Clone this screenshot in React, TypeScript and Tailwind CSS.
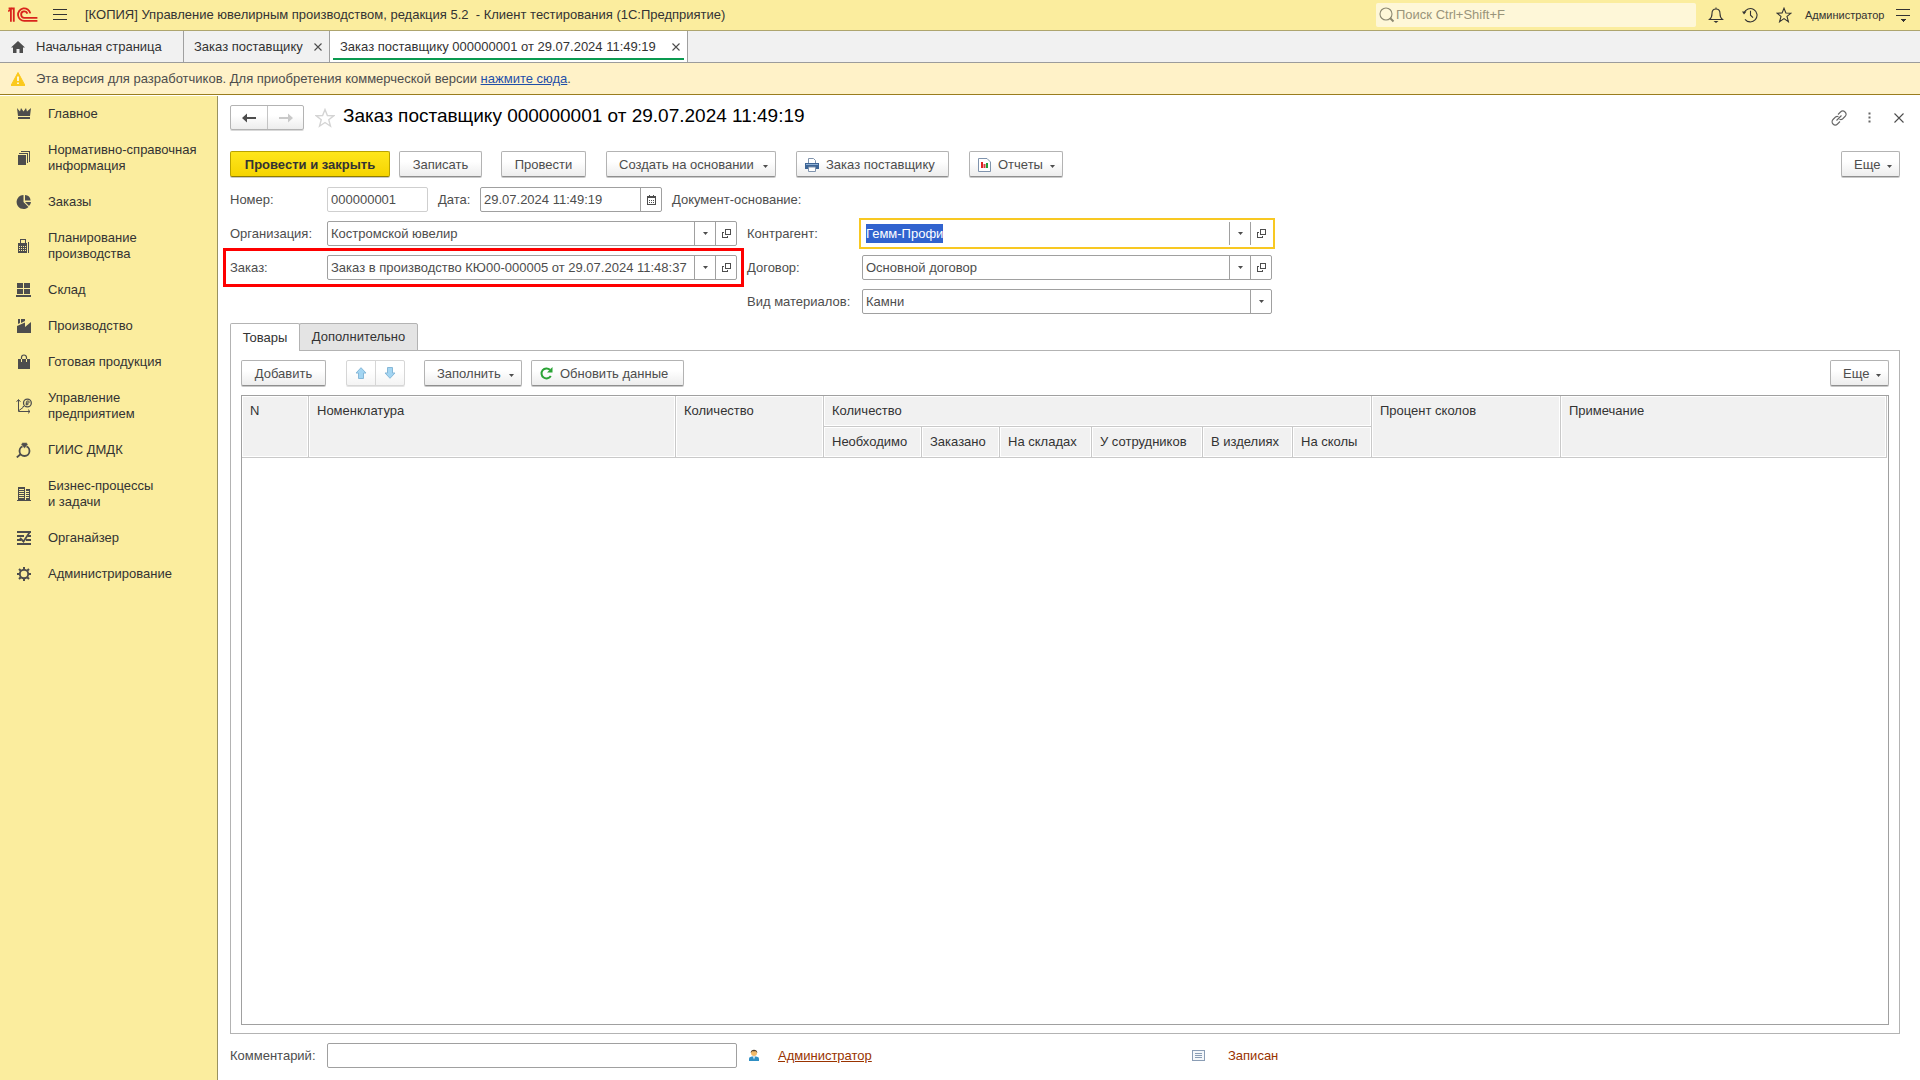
import React, { useEffect, useRef } from 'react';

/* ---------- icons ---------- */

const Logo = () => (
  <svg width="30" height="16" viewBox="0 0 30 16" fill="none" stroke="#d9241c" strokeWidth="1.8">
    <path d="M0.2 4.4 L2.9 2.4 V14.8" />
    <path d="M0.6 1.5 H5.8 V14.8" />
    <path d="M22.3 6.4 A6.2 6.2 0 1 0 16.6 13.8 H29.4" />
    <path d="M19.4 6.6 A3.2 3.2 0 1 0 16.6 10.8 H29.4" />
  </svg>
);

const Caret = () => (
  <svg width="5" height="3" viewBox="0 0 5 3" fill="#4d4d4d">
    <path d="M0 0 H5 L2.5 3 Z" />
  </svg>
);

const OpenIcon = () => (
  <svg width="9" height="9" viewBox="0 0 9 9" fill="none" stroke="#4d4d4d" shapeRendering="crispEdges">
    <path d="M3.5 0.5 H8.5 V5.5 H3.5 Z" />
    <path d="M2 3.5 H0.5 V8.5 H5.5 V7" />
  </svg>
);

const CloseIcon = ({ size = 8 }: { size?: number }) => (
  <svg width={size} height={size} viewBox={`0 0 ${size} ${size}`} stroke="#4d4d4d" strokeWidth="1.1">
    <path d={`M0.5 0.5 L${size - 0.5} ${size - 0.5} M${size - 0.5} 0.5 L0.5 ${size - 0.5}`} />
  </svg>
);

const StarIcon = ({ color, size }: { color: string; size: number }) => (
  <svg width={size} height={size} viewBox="0 0 16 16" fill="none" stroke={color} strokeWidth="1.1">
    <path d="M8 1.2 L9.9 6 L15 6.2 L11 9.4 L12.4 14.6 L8 11.6 L3.6 14.6 L5 9.4 L1 6.2 L6.1 6 Z" />
  </svg>
);

const sectionIcons: Record<string, React.ReactNode> = {
  crown: <path d="M1 2 L4 5.5 L5 2 L7.5 5.5 L10 2 L11 5.5 L15 2 L14 10 H2 Z M2 11 H14 V13 H2 Z" />,
  stack: (
    <g shapeRendering="crispEdges">
      <path d="M2 5 H10 V15 H2 Z" />
      <path d="M3 3.5 H11.5 V13 M5 1.5 H13.5 V12" fill="none" stroke="#4d4d4d" />
    </g>
  ),
  pie: <path d="M7.5 1 V8 L12.5 13 A7 7 0 1 1 7.5 1 Z M9 1 A6 6 0 0 1 14.6 6.5 H9 Z M9 8 H15 A6 6 0 0 1 13 12 Z" />,
  calc: (
    <g shapeRendering="crispEdges">
      <path d="M4.5 5 V1.5 H9.5 V5" fill="none" stroke="#4d4d4d" />
      <path d="M2 5 H11 V15 H2 Z M12 4 H13 V15 H12 Z" />
      <path d="M3 8.5 H10 M3 10.5 H10 M3 12.5 H10" stroke="#fbed9e" strokeDasharray="1 1" />
    </g>
  ),
  warehouse: (
    <path shapeRendering="crispEdges" d="M1 1 H7 V6 H1 Z M8 1 H14 V6 H8 Z M1 7 H7 V12 H1 Z M8 7 H14 V12 H8 Z M0 13 H15 V15 H0 Z" />
  ),
  factory: <path d="M2 1 H4 V5 L2 6 Z M5 1 H9 V3 L5 5 Z M1 8 L9 4.5 V9 L15 4 V15 H1 Z" />,
  bag: (
    <>
      <path d="M2 5 H14 V15 H2 Z" />
      <path d="M5.5 6 V3.5 A2.5 2.5 0 0 1 10.5 3.5 V6" fill="none" stroke="#4d4d4d" strokeWidth="1.2" />
      <path d="M5.5 5 V8 M10.5 5 V8" stroke="#fbed9e" />
    </>
  ),
  chart: (
    <>
      <path d="M2.5 2 V13.5 H14 M0.6 3.8 L2.5 1.5 L4.4 3.8 M12 11.6 L14 13.5 L12 15.4 M3 12.5 L7 9.5 V8.5 H8" fill="none" stroke="#4d4d4d" />
      <circle cx="11.4" cy="5" r="3.9" fill="none" stroke="#4d4d4d" strokeWidth="1.3" />
      <path d="M10.8 7.5 V3 H12.2 A1 1 0 0 1 12.2 5.1 H9.6 M9.6 6.3 H12.4" fill="none" stroke="#4d4d4d" strokeWidth="1" />
    </>
  ),
  ring: (
    <>
      <circle cx="8.5" cy="9" r="5" fill="none" stroke="#4d4d4d" strokeWidth="1.8" />
      <path d="M5 2.4 L6.5 0.6 H10.5 L12 2.4 L8.5 6.5 Z" stroke="#fbed9e" strokeWidth="0.6" />
      <path d="M4.8 12 L0.8 15.4" stroke="#4d4d4d" strokeWidth="1.8" />
    </>
  ),
  building: (
    <g shapeRendering="crispEdges">
      <path d="M2 1 H9 V14 H2 Z M10 3 H14 V14 H10 Z M1 14 H15 V15 H1 Z" />
      <path
        d="M3 3.5 H8 M3 5.5 H8 M3 7.5 H8 M3 9.5 H8 M3 11.5 H8 M10 5.5 H13 M10 7.5 H13 M10 9.5 H13 M10 11.5 H13"
        stroke="#fbed9e"
      />
    </g>
  ),
  organizer: (
    <>
      <path d="M1 1 H15 V3 H1 Z M1 5 H8 V7 H1 Z M12 5 H15 V7 H12 Z M1 9 H5 V11 H1 Z M10 9 H15 V11 H10 Z M1 13 H15 V15 H1 Z" />
      <path d="M4 8 L7.5 11.5 L13.5 2.5" fill="none" stroke="#4d4d4d" strokeWidth="1.8" />
    </>
  ),
  gear: (
    <>
      <circle cx="8" cy="8" r="4.2" fill="none" stroke="#4d4d4d" strokeWidth="1.9" />
      <path
        d="M8 1 V3.5 M8 12.5 V15 M1 8 H3.5 M12.5 8 H15 M3 3 L4.8 4.8 M11.2 11.2 L13 13 M3 13 L4.8 11.2 M11.2 4.8 L13 3"
        stroke="#4d4d4d"
        strokeWidth="2"
      />
    </>
  ),
};

/* ---------- data ---------- */

const sections = [
  { icon: 'crown', lines: ['Главное'] },
  { icon: 'stack', lines: ['Нормативно-справочная', 'информация'] },
  { icon: 'pie', lines: ['Заказы'] },
  { icon: 'calc', lines: ['Планирование', 'производства'] },
  { icon: 'warehouse', lines: ['Склад'] },
  { icon: 'factory', lines: ['Производство'] },
  { icon: 'bag', lines: ['Готовая продукция'] },
  { icon: 'chart', lines: ['Управление', 'предприятием'] },
  { icon: 'ring', lines: ['ГИИС ДМДК'] },
  { icon: 'building', lines: ['Бизнес-процессы', 'и задачи'] },
  { icon: 'organizer', lines: ['Органайзер'] },
  { icon: 'gear', lines: ['Администрирование'] },
];

const quantityColumns = ['Необходимо', 'Заказано', 'На складах', 'У сотрудников', 'В изделиях', 'На сколы'];

/* ---------- controls ---------- */

interface ButtonProps {
  className?: string;
  icon?: React.ReactNode;
  caret?: boolean;
  children: React.ReactNode;
}

const Button = ({ className = '', icon, caret, children }: ButtonProps) => (
  <button
    type="button"
    className={`flex h-[26px] shrink-0 items-center rounded-xs border border-[#b3b3b3] border-b-[#8f8f8f] bg-linear-to-b from-white from-40% to-[#ededed] pt-px whitespace-nowrap shadow-[0_1px_0_#c9c9c9] ${
      icon ? 'gap-[7px] pl-2' : caret ? 'pl-3' : 'justify-center'
    } ${className}`}
  >
    {icon}
    {children}
    {caret && (
      <span className="mt-1 mr-[7px] ml-auto">
        <Caret />
      </span>
    )}
  </button>
);

interface FieldProps {
  id: string;
  value: string;
  focused?: boolean;
}

// Reference field: text, list button, open button
const RefField = ({ id, value, focused }: FieldProps) => {
  const ref = useRef<HTMLInputElement>(null);

  useEffect(() => {
    if (focused) {
      ref.current?.focus();
      ref.current?.select();
    }
  }, [focused]);

  return (
    <div
      className={`flex h-[25px] w-[410px] border bg-white ${
        focused ? 'border-white ring-2 ring-[#f8c822] ring-offset-1' : 'rounded-xs border-[#a0a0a0]'
      }`}
    >
      <input
        ref={ref}
        id={id}
        defaultValue={value}
        className="my-px mr-1 min-w-0 flex-1 bg-transparent pl-[3px] outline-none selection:bg-[#3163cf] selection:text-white"
      />
      <button type="button" aria-label="Выбрать" className="flex w-[21px] items-center justify-center border-l border-[#a0a0a0]">
        <Caret />
      </button>
      <button type="button" aria-label="Открыть" className="flex w-[21px] items-center justify-center border-l border-[#a0a0a0]">
        <OpenIcon />
      </button>
    </div>
  );
};

/* ---------- page parts ---------- */

const TopBar = () => (
  <header className="flex h-[31px] items-center border-b border-[#aea56e] bg-[#fbed9e] pl-2">
    <Logo />
    <button type="button" aria-label="Меню" className="ml-[15px]">
      <svg width="14" height="12" viewBox="0 0 14 12" stroke="#333" shapeRendering="crispEdges">
        <path d="M0 0.5 H14 M0 5.5 H14 M0 10.5 H14" />
      </svg>
    </button>
    <h1 className="ml-[18px] whitespace-pre text-[#333]">
      [КОПИЯ] Управление ювелирным производством, редакция 5.2{'  '}- Клиент тестирования (1С:Предприятие)
    </h1>
    <label className="ml-auto flex h-6 w-80 items-center rounded-xs bg-[#fef7d8] pl-[3px]">
      <svg width="16" height="16" viewBox="0 0 16 16" fill="none" stroke="#8c8871" strokeWidth="1.1">
        <circle cx="7" cy="7" r="6" />
        <path d="M11 11 L14.5 14.5" strokeWidth="2" />
      </svg>
      <input
        type="search"
        aria-label="Поиск"
        placeholder="Поиск Ctrl+Shift+F"
        className="ml-px flex-1 bg-transparent outline-none placeholder:text-[#99947a]"
      />
    </label>
    <button type="button" aria-label="Уведомления" className="ml-3">
      <svg width="16" height="16" viewBox="0 0 16 16" fill="none" stroke="#333" strokeWidth="1.1">
        <path d="M1.5 12.5 C3.5 11 4 9.5 4 6.5 C4 3.8 5.5 2 8 2 C10.5 2 12 3.8 12 6.5 C12 9.5 12.5 11 14.5 12.5 Z M8 0.5 V2" />
        <path d="M5.5 14 H10.5 L8 16 Z" fill="#333" stroke="none" />
      </svg>
    </button>
    <button type="button" aria-label="История" className="ml-[18px]">
      <svg width="16" height="16" viewBox="0 0 16 16" fill="none" stroke="#333" strokeWidth="1.1">
        <path d="M2 6 A6.7 6.7 0 1 1 3 12.3 M8.5 3.8 V8.2 L11 10.6" />
        <path d="M0 4.5 H4.5 L2 7.5 Z" fill="#333" stroke="none" />
      </svg>
    </button>
    <button type="button" aria-label="Избранное" className="ml-[18px]">
      <StarIcon color="#333" size={16} />
    </button>
    <button type="button" className="ml-[13px] w-[77px] text-left text-[11px] text-[#333]">
      Администратор
    </button>
    <button type="button" aria-label="Сервис" className="mr-2.5 ml-3.5">
      <svg width="14" height="14" viewBox="0 0 14 14" fill="#333" shapeRendering="crispEdges">
        <path d="M0 1 H14 V2 H0 Z M0 7 H14 V8 H0 Z M4 11 H10 L7 14 Z" />
      </svg>
    </button>
  </header>
);

const WindowTabs = () => (
  <nav className="flex h-8 border-b border-[#9c9c9c] bg-[#f1f1f1] text-[#333]">
    <a href="#home" className="flex w-[184px] items-center border-r border-[#a0a0a0] pl-[11px]">
      <svg width="14" height="12" viewBox="0 0 14 12" fill="#4d4d4d">
        <path d="M7 0 L14 6.5 H12 V12 H8.5 V8 H5.5 V12 H2 V6.5 H0 Z" />
      </svg>
      <span className="ml-[11px]">Начальная страница</span>
    </a>
    <div className="flex w-[146px] items-center justify-between border-r border-[#a0a0a0] pr-[7px] pl-2.5">
      <a href="#list">Заказ поставщику</a>
      <button type="button" aria-label="Закрыть вкладку">
        <CloseIcon />
      </button>
    </div>
    <div className="flex w-[358px] border-r border-[#a0a0a0] bg-white px-[3px]">
      <div className="mb-[2px] flex flex-1 items-center justify-between border-b-2 border-[#0a9a50] pt-1 pr-1 pl-[7px]">
        <a href="#document" className="whitespace-nowrap">
          Заказ поставщику 000000001 от 29.07.2024 11:49:19
        </a>
        <button type="button" aria-label="Закрыть вкладку">
          <CloseIcon />
        </button>
      </div>
    </div>
  </nav>
);

const Banner = () => (
  <div className="flex h-8 items-center border-b border-[#9a7d1e] bg-[#fff2c8] pl-[11px]">
    <svg width="14" height="14" viewBox="0 0 14 14">
      <path d="M7 0.5 L14 13.5 H0 Z" fill="#fbc91c" stroke="#fbc91c" strokeLinejoin="round" />
      <path d="M7 4.5 V9 M7 10.5 V12" stroke="#fff" strokeWidth="1.6" />
    </svg>
    <p className="ml-[11px]">
      Эта версия для разработчиков. Для приобретения коммерческой версии{' '}
      <a href="#buy" className="text-[#1f4fa8] underline">
        нажмите сюда
      </a>
      .
    </p>
  </div>
);

const Sidebar = () => (
  <aside className="w-[218px] shrink-0 border-r border-[#99925f] bg-[#fbed9e] text-[#333]">
    <ul>
      {sections.map((section) => (
        <li key={section.icon}>
          <a href={`#${section.icon}`} className="flex items-center py-2.5 pl-4 leading-4">
            <svg width="16" height="16" viewBox="0 0 16 16" fill="#4d4d4d" className="shrink-0">
              {sectionIcons[section.icon]}
            </svg>
            <span className="ml-4">
              {section.lines.map((line) => (
                <span key={line} className="block whitespace-nowrap">
                  {line}
                </span>
              ))}
            </span>
          </a>
        </li>
      ))}
    </ul>
  </aside>
);

const FormHeader = () => (
  <div className="flex h-[25px] items-center">
    <div className="flex h-[25px] rounded-xs border border-[#b3b3b3] bg-linear-to-b from-white from-40% to-[#ededed] shadow-[0_1px_0_#d9d9d9]">
      <button type="button" aria-label="Назад" className="flex w-9 items-center justify-center">
        <svg width="14" height="10" viewBox="0 0 14 10" fill="#4d4d4d">
          <path d="M0 5 L5 0.5 V4 H14 V6 H5 V9.5 Z" />
        </svg>
      </button>
      <button type="button" aria-label="Вперед" className="flex w-9 items-center justify-center border-l border-[#c4c4c4]">
        <svg width="14" height="10" viewBox="0 0 14 10" fill="#c9c9c9">
          <path d="M14 5 L9 0.5 V4 H0 V6 H9 V9.5 Z" />
        </svg>
      </button>
    </div>
    <button type="button" aria-label="В избранное" className="ml-[11px]">
      <StarIcon color="#d4d4d4" size={20} />
    </button>
    <h2 className="ml-2 pb-0.5 text-[19px] text-black">Заказ поставщику 000000001 от 29.07.2024 11:49:19</h2>
    <div className="-mr-1 ml-auto flex items-center">
      <button type="button" aria-label="Ссылка">
        <svg width="16" height="16" viewBox="0 0 16 16" fill="none" stroke="#666" strokeWidth="1.1">
          <path d="M7 4.5 L9.5 2 A3 3 0 0 1 14 6.5 L11.5 9 A3 3 0 0 1 8.5 9.3" />
          <path d="M9 11.5 L6.5 14 A3 3 0 0 1 2 9.5 L4.5 7 A3 3 0 0 1 7.5 6.7 M5.5 10.5 L10.5 5.5" />
        </svg>
      </button>
      <button type="button" aria-label="Еще действия" className="ml-[21px]">
        <svg width="3" height="11" viewBox="0 0 3 11" fill="#666">
          <path d="M0.5 0.5 H2.5 V2.5 H0.5 Z M0.5 4.5 H2.5 V6.5 H0.5 Z M0.5 8.5 H2.5 V10.5 H0.5 Z" />
        </svg>
      </button>
      <button type="button" aria-label="Закрыть" className="ml-[23px]">
        <CloseIcon size={10} />
      </button>
    </div>
  </div>
);

const PrinterIcon = () => (
  <svg width="14" height="14" viewBox="0 0 14 14">
    <path d="M3.5 5 V0.5 H8.5 L10.5 2.5 V5" fill="#fff" stroke="#7f93ad" />
    <path d="M0 5 H14 V11 H0 Z" fill="#3d6596" />
    <path d="M1 6.5 H13" stroke="#8fb0d4" />
    <path d="M3.5 9 H10.5 V13.5 H3.5 Z" fill="#fff" stroke="#7f93ad" />
  </svg>
);

const ReportIcon = () => (
  <svg width="13" height="14" viewBox="0 0 13 14">
    <path d="M0.5 0.5 H9 L12.5 4 V13.5 H0.5 Z" fill="#fff" stroke="#7f93ad" />
    <path d="M3 4 H5 V10 H3 Z" fill="#e02424" />
    <path d="M5.5 6 H7.5 V10 H5.5 Z" fill="#d04545" />
    <path d="M8 5 H10 V10 H8 Z" fill="#1e9e3a" />
  </svg>
);

const RefreshIcon = () => (
  <svg width="13" height="13" viewBox="0 0 13 13">
    <path d="M10.8 9 A5 5 0 1 1 10 2.8" fill="none" stroke="#2ba336" strokeWidth="2" />
    <path d="M7 5.5 L12.5 5.5 V0 Z" fill="#2ba336" />
  </svg>
);

const CommandBar = () => (
  <div className="mt-[21px] flex h-[27px]">
    <button
      type="button"
      className="h-[26px] w-40 rounded-xs border border-[#b9a200] border-b-[#8f7d00] bg-linear-to-b from-[#ffe61a] to-[#f5d400] pt-px font-bold whitespace-nowrap text-[#333] shadow-[0_1px_0_#c9c9c9]"
    >
      Провести и закрыть
    </button>
    <Button className="ml-[9px] w-[83px]">Записать</Button>
    <Button className="ml-[19px] w-[85px]">Провести</Button>
    <Button caret className="ml-5 w-[170px]">
      Создать на основании
    </Button>
    <Button icon={<PrinterIcon />} className="ml-5 w-[153px]">
      Заказ поставщику
    </Button>
    <Button icon={<ReportIcon />} caret className="ml-5 w-[94px]">
      Отчеты
    </Button>
    <Button caret className="ml-auto w-[59px]">
      Еще
    </Button>
  </div>
);

const DocumentFields = () => (
  <form className="mt-[9px] flex flex-col gap-[9px]">
    <div className="flex h-[25px] items-center">
      <label htmlFor="number" className="w-[97px]">
        Номер:
      </label>
      <input
        id="number"
        readOnly
        defaultValue="000000001"
        className="h-[25px] w-[101px] rounded-xs border border-[#cfcfcf] pl-[3px] outline-none"
      />
      <label htmlFor="date" className="ml-2.5 w-[42px]">
        Дата:
      </label>
      <div className="flex h-[25px] w-[182px] rounded-xs border border-[#a0a0a0]">
        <input id="date" defaultValue="29.07.2024 11:49:19" className="min-w-0 flex-1 bg-transparent pl-[3px] outline-none" />
        <button type="button" aria-label="Календарь" className="flex w-[21px] items-center justify-center border-l border-[#a0a0a0]">
          <svg width="9" height="10" viewBox="0 0 9 10" fill="none" stroke="#4d4d4d" shapeRendering="crispEdges">
            <path d="M0.5 1.5 H8.5 V9.5 H0.5 Z M0 2.5 H9 M2.5 0 V2 M6.5 0 V2" />
            <path d="M2 5.5 H8 M2 7.5 H8" strokeDasharray="1 1" />
          </svg>
        </button>
      </div>
      <span className="ml-2.5">Документ-основание:</span>
    </div>

    <div className="flex gap-2.5">
      <div className="flex flex-col gap-[9px]">
        <div className="flex items-center">
          <label htmlFor="org" className="w-[97px]">
            Организация:
          </label>
          <RefField id="org" value="Костромской ювелир" />
        </div>
        <div className="relative flex items-center">
          <label htmlFor="order" className="w-[97px]">
            Заказ:
          </label>
          <RefField id="order" value="Заказ в производство КЮ00-000005 от 29.07.2024 11:48:37" />
          <div className="pointer-events-none absolute -inset-[7px] border-3 border-[#fe0000]" />
        </div>
      </div>
      <div className="flex flex-col gap-[9px]">
        <div className="flex items-center">
          <label htmlFor="partner" className="w-[115px]">
            Контрагент:
          </label>
          <RefField id="partner" value="Гемм-Профи" focused />
        </div>
        <div className="flex items-center">
          <label htmlFor="contract" className="w-[115px]">
            Договор:
          </label>
          <RefField id="contract" value="Основной договор" />
        </div>
        <div className="flex items-center">
          <label htmlFor="kind" className="w-[115px] whitespace-nowrap">
            Вид материалов:
          </label>
          <div className="flex h-[25px] w-[410px] rounded-xs border border-[#a0a0a0]">
            <select id="kind" className="flex-1 appearance-none bg-transparent pl-[3px] outline-none">
              <option>Камни</option>
            </select>
            <span className="flex w-[21px] items-center justify-center border-l border-[#a0a0a0]">
              <Caret />
            </span>
          </div>
        </div>
      </div>
    </div>
  </form>
);

const thClass = 'border-r border-b border-[#c9c9c9] bg-[#f1f1f1] px-2 py-[7px] text-left align-top font-normal leading-4 whitespace-nowrap shadow-[inset_0_0_0_1px_#fff]';

const GoodsTable = () => (
  <div className="mt-2 flex-1 border border-[#a0a0a0] pr-px">
    <table className="w-full table-fixed border-separate border-spacing-0 text-[#333]">
      <colgroup>
        <col className="w-[67px]" />
        <col className="w-[367px]" />
        <col className="w-[148px]" />
        <col className="w-[98px]" />
        <col className="w-[78px]" />
        <col className="w-[92px]" />
        <col className="w-[111px]" />
        <col className="w-[90px]" />
        <col className="w-[79px]" />
        <col className="w-[189px]" />
        <col />
      </colgroup>
      <thead>
        <tr>
          <th rowSpan={2} className={thClass}>N</th>
          <th rowSpan={2} className={thClass}>Номенклатура</th>
          <th rowSpan={2} className={thClass}>Количество</th>
          <th colSpan={6} className={thClass}>Количество</th>
          <th rowSpan={2} className={thClass}>Процент сколов</th>
          <th rowSpan={2} className={thClass}>Примечание</th>
        </tr>
        <tr>
          {quantityColumns.map((name) => (
            <th key={name} className={thClass}>{name}</th>
          ))}
        </tr>
      </thead>
      <tbody />
    </table>
  </div>
);

const GoodsPanel = () => (
  <section className="mt-[9px] flex flex-1 flex-col">
    <div role="tablist" className="relative z-10 -mb-px flex h-7 text-[#333]">
      <button type="button" role="tab" aria-selected="true" className="w-[70px] rounded-t-xs border border-b-0 border-[#b3b3b3] bg-white">
        Товары
      </button>
      <button type="button" role="tab" aria-selected="false" className="-ml-px w-[119px] rounded-t-xs border border-[#b3b3b3] bg-[#e4e4e4]">
        Дополнительно
      </button>
    </div>
    <div className="flex flex-1 flex-col border border-[#b3b3b3] px-2.5 pt-[9px] pb-2">
      <div className="flex h-[27px]">
        <Button className="w-[85px]">Добавить</Button>
        <div className="ml-5 flex h-[26px] rounded-xs border border-[#d6d6d6] bg-linear-to-b from-white from-40% to-[#f4f4f4] shadow-[0_1px_0_#e4e4e4]">
          <button type="button" aria-label="Вверх" className="flex w-7 items-center justify-center">
            <svg width="12" height="12" viewBox="0 0 12 12" fill="#a3d5f2" stroke="#86b8d8">
              <path d="M6 0.7 L11 6 H8.5 V11.5 H3.5 V6 H1 Z" />
            </svg>
          </button>
          <button type="button" aria-label="Вниз" className="flex w-[29px] items-center justify-center border-l border-[#d6d6d6]">
            <svg width="12" height="12" viewBox="0 0 12 12" fill="#a3d5f2" stroke="#86b8d8">
              <path d="M6 11.3 L11 6 H8.5 V0.5 H3.5 V6 H1 Z" />
            </svg>
          </button>
        </div>
        <Button caret className="ml-[19px] w-[98px]">
          Заполнить
        </Button>
        <Button icon={<RefreshIcon />} className="ml-[9px] w-[153px]">
          Обновить данные
        </Button>
        <Button caret className="ml-auto w-[59px]">
          Еще
        </Button>
      </div>
      <GoodsTable />
    </div>
  </section>
);

const FormFooter = () => (
  <footer className="mt-[9px] flex items-center">
    <label htmlFor="comment" className="w-[97px]">
      Комментарий:
    </label>
    <input id="comment" className="h-[25px] w-[410px] rounded-xs border border-[#a0a0a0] pl-[3px] outline-none" />
    <svg width="12" height="14" viewBox="0 0 12 14" className="ml-[11px]">
      <path d="M1 12 V9.5 C1 8 3 7.5 6 7.5 C9 7.5 11 8 11 9.5 V12 Z" fill="#2f8fc4" />
      <circle cx="6" cy="4" r="3" fill="#f2b968" />
      <path d="M2.8 4 C2 -0.5 10 -0.5 9.2 4 L8 2.3 H4 Z" fill="#4a3a2a" />
      <path d="M5 7.5 H7 L6 10.5 Z" fill="#fff" />
    </svg>
    <a href="#author" className="ml-[18px] w-[414px] text-[#993300] underline">
      Администратор
    </a>
    <svg width="13" height="11" viewBox="0 0 13 11" fill="#f4f7fa" stroke="#8a9db5" shapeRendering="crispEdges">
      <path d="M0.5 0.5 H12.5 V10.5 H0.5 Z M3 3.5 H10 M3 5.5 H10 M3 7.5 H10" />
    </svg>
    <span className="ml-[23px] text-[#993300]">Записан</span>
  </footer>
);

export default function App() {
  return (
    <div className="flex min-h-screen flex-col bg-white font-['Liberation_Sans',Arial,sans-serif] text-[13px] text-[#4d4d4d]">
      <TopBar />
      <WindowTabs />
      <Banner />
      <div className="flex flex-1 pt-px">
        <Sidebar />
        <main className="flex min-w-0 flex-1 flex-col pt-[9px] pr-5 pb-3 pl-3">
          <FormHeader />
          <CommandBar />
          <DocumentFields />
          <GoodsPanel />
          <FormFooter />
        </main>
      </div>
    </div>
  );
}
